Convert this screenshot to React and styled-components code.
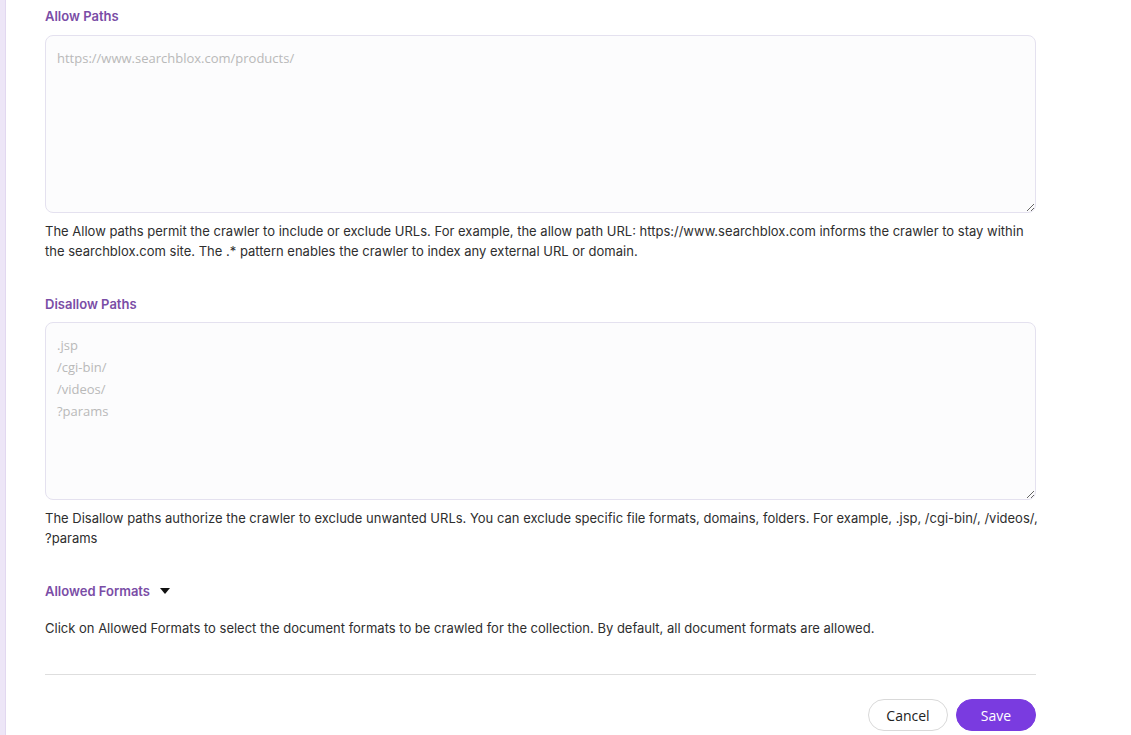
import React from 'react';
import styled, { createGlobalStyle } from 'styled-components';

const Global = createGlobalStyle`
  html, body { margin: 0; padding: 0; background: #fff; }
  body { font-family: Inter, "Noto Sans", sans-serif; color: #2b2b2b; }
  * { box-sizing: border-box; }
`;

const Page = styled.div`
  display: flex;
  min-height: 735px;
`;

const SideRail = styled.div`
  width: 6px;
  flex: none;
  background: #ede6f7;
  border-right: 1px solid #e2d8f0;
`;

const Content = styled.div`
  width: 991px;
  margin-left: 39px;
  padding-top: 7px;
`;

const Section = styled.section`
  margin-bottom: ${p => p.$gap || 0}px;
`;

const Label = styled.div`
  display: flex;
  align-items: center;
  gap: 8px;
  height: 18px;
  font-size: 13px;
  font-weight: 600;
  color: #7a4da6;
  margin-bottom: ${p => p.$mb || 10}px;
`;

const Caret = styled.span`
  width: 0;
  height: 0;
  border-left: 5px solid transparent;
  border-right: 5px solid transparent;
  border-top: 6px solid #111;
  margin-left: 2px;
`;

const Area = styled.textarea`
  display: block;
  width: 100%;
  height: 178px;
  resize: vertical;
  background: #fcfcfd;
  border: 1px solid #e4e1ef;
  border-radius: 8px;
  padding: 11px 11px;
  font-family: "Open Sans", sans-serif;
  font-size: 13px;
  line-height: 22px;
  color: #333;
  outline: none;
  &::placeholder { color: #b9b9b9; }
`;

const Help = styled.p`
  margin: ${p => p.$mt ?? 8}px -5px 0 0;
  font-size: 13px;
  line-height: 20px;
  color: #2e2e2e;
`;

const Divider = styled.hr`
  border: none;
  border-top: 1px solid #dedede;
  margin: 0;
`;

const Actions = styled.div`
  display: flex;
  justify-content: flex-end;
  gap: 8px;
  margin-top: 24px;
`;

const Button = styled.button`
  width: 80px;
  height: 32px;
  border-radius: 16px;
  font-family: "Open Sans", sans-serif;
  font-size: 14px;
  cursor: pointer;
  border: 1px solid ${p => (p.$primary ? '#7a3be0' : '#d9d9d9')};
  background: ${p => (p.$primary ? '#7a3be0' : '#fff')};
  color: ${p => (p.$primary ? '#fff' : '#222')};
`;

export default function App() {
  return (
    <>
      <Global />
      <Page>
        <SideRail />
        <Content>
          <Section $gap={34}>
            <Label>Allow Paths</Label>
            <Area placeholder="https://www.searchblox.com/products/" />
            <Help>
              The Allow paths permit the crawler to include or exclude URLs. For example, the allow path URL: https://www.searchblox.com informs the crawler to stay within the searchblox.com site. The .* pattern enables the crawler to index any external URL or domain.
            </Help>
          </Section>
          <Section $gap={34}>
            <Label $mb={9}>Disallow Paths</Label>
            <Area placeholder={'.jsp\n/cgi-bin/\n/videos/\n?params'} />
            <Help>
              The Disallow paths authorize the crawler to exclude unwanted URLs. You can exclude specific file formats, domains, folders. For example, .jsp, /cgi-bin/, /videos/, ?params
            </Help>
          </Section>
          <Section $gap={36}>
            <Label $mb={18}>
              Allowed Formats <Caret />
            </Label>
            <Help $mt={0}>
              Click on Allowed Formats to select the document formats to be crawled for the collection. By default, all document formats are allowed.
            </Help>
          </Section>
          <Divider />
          <Actions>
            <Button>Cancel</Button>
            <Button $primary>Save</Button>
          </Actions>
        </Content>
      </Page>
    </>
  );
}
